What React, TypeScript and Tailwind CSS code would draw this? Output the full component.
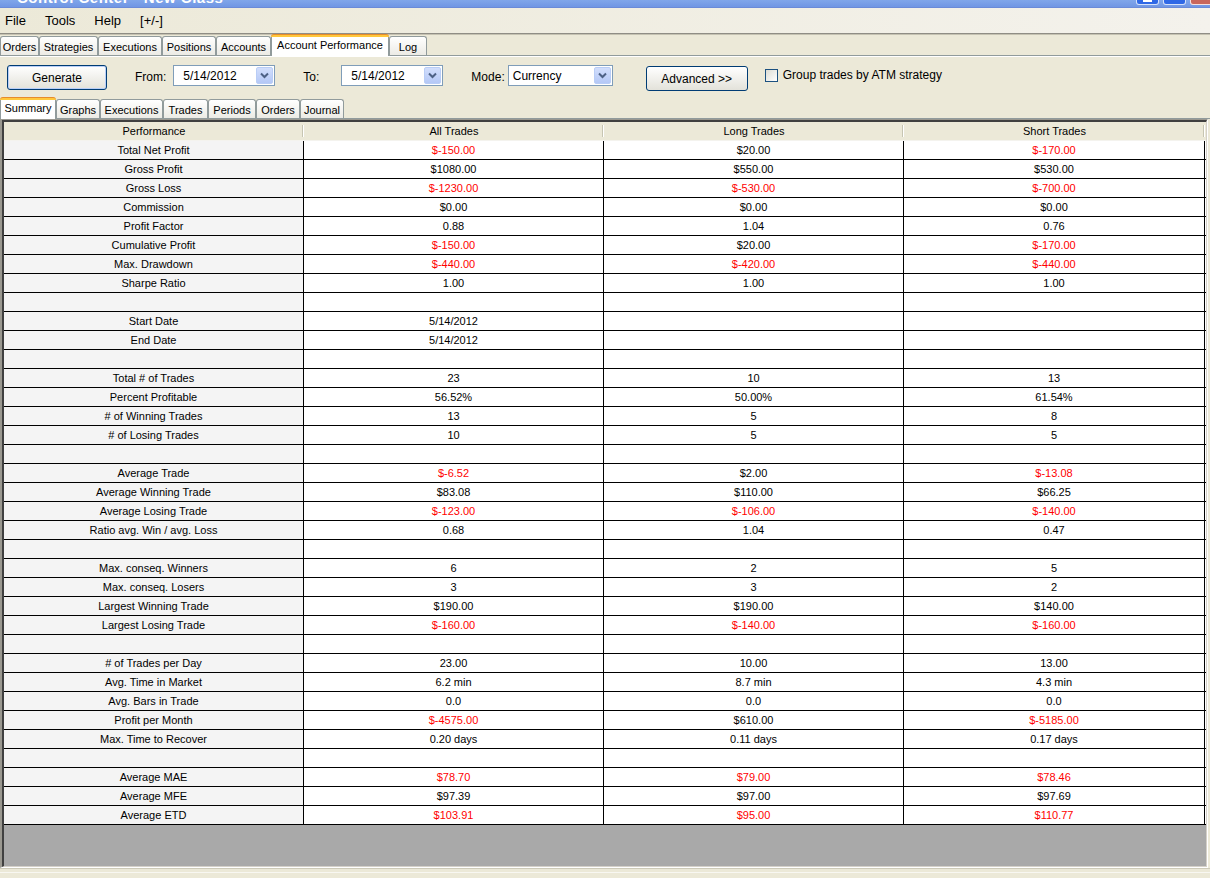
import React from "react";

type Row = { l: string; v: [string, string, string]; r?: [boolean, boolean, boolean] } | null;

const rows: Row[] = [
  { l: "Total Net Profit", v: ["$-150.00", "$20.00", "$-170.00"], r: [true, false, true] },
  { l: "Gross Profit", v: ["$1080.00", "$550.00", "$530.00"] },
  { l: "Gross Loss", v: ["$-1230.00", "$-530.00", "$-700.00"], r: [true, true, true] },
  { l: "Commission", v: ["$0.00", "$0.00", "$0.00"] },
  { l: "Profit Factor", v: ["0.88", "1.04", "0.76"] },
  { l: "Cumulative Profit", v: ["$-150.00", "$20.00", "$-170.00"], r: [true, false, true] },
  { l: "Max. Drawdown", v: ["$-440.00", "$-420.00", "$-440.00"], r: [true, true, true] },
  { l: "Sharpe Ratio", v: ["1.00", "1.00", "1.00"] },
  null,
  { l: "Start Date", v: ["5/14/2012", "", ""] },
  { l: "End Date", v: ["5/14/2012", "", ""] },
  null,
  { l: "Total # of Trades", v: ["23", "10", "13"] },
  { l: "Percent Profitable", v: ["56.52%", "50.00%", "61.54%"] },
  { l: "# of Winning Trades", v: ["13", "5", "8"] },
  { l: "# of Losing Trades", v: ["10", "5", "5"] },
  null,
  { l: "Average Trade", v: ["$-6.52", "$2.00", "$-13.08"], r: [true, false, true] },
  { l: "Average Winning Trade", v: ["$83.08", "$110.00", "$66.25"] },
  { l: "Average Losing Trade", v: ["$-123.00", "$-106.00", "$-140.00"], r: [true, true, true] },
  { l: "Ratio avg. Win / avg. Loss", v: ["0.68", "1.04", "0.47"] },
  null,
  { l: "Max. conseq. Winners", v: ["6", "2", "5"] },
  { l: "Max. conseq. Losers", v: ["3", "3", "2"] },
  { l: "Largest Winning Trade", v: ["$190.00", "$190.00", "$140.00"] },
  { l: "Largest Losing Trade", v: ["$-160.00", "$-140.00", "$-160.00"], r: [true, true, true] },
  null,
  { l: "# of Trades per Day", v: ["23.00", "10.00", "13.00"] },
  { l: "Avg. Time in Market", v: ["6.2 min", "8.7 min", "4.3 min"] },
  { l: "Avg. Bars in Trade", v: ["0.0", "0.0", "0.0"] },
  { l: "Profit per Month", v: ["$-4575.00", "$610.00", "$-5185.00"], r: [true, false, true] },
  { l: "Max. Time to Recover", v: ["0.20 days", "0.11 days", "0.17 days"] },
  null,
  { l: "Average MAE", v: ["$78.70", "$79.00", "$78.46"], r: [true, true, true] },
  { l: "Average MFE", v: ["$97.39", "$97.00", "$97.69"] },
  { l: "Average ETD", v: ["$103.91", "$95.00", "$110.77"], r: [true, true, true] },
];

const mainTabs = [
  { t: "Orders", w: "w-[39px]" },
  { t: "Strategies", w: "w-[59px]" },
  { t: "Executions", w: "w-[64px]" },
  { t: "Positions", w: "w-[54px]" },
  { t: "Accounts", w: "w-[55px]" },
  { t: "Account Performance", w: "w-[118px]", sel: true },
  { t: "Log", w: "w-[38px]" },
];

const subTabs = [
  { t: "Summary", w: "w-[56px]", sel: true },
  { t: "Graphs", w: "w-[44px]" },
  { t: "Executions", w: "w-[63px]" },
  { t: "Trades", w: "w-[45px]" },
  { t: "Periods", w: "w-[48px]" },
  { t: "Orders", w: "w-[44px]" },
  { t: "Journal", w: "w-[44px]" },
];

function Tab({ t, w, sel }: { t: string; w: string; sel?: boolean }) {
  if (sel) {
    return (
      <div className={`${w} h-[22px] mb-[-1px] flex flex-col relative z-10`}>
        <div className="h-[3px] bg-[#ffc83c] border-t border-[#e68b2c] rounded-t-[3px]" />
        <div className="flex-1 bg-white border-x border-[#919b9c] flex items-start justify-center pt-[1px] leading-[14px]">
          {t}
        </div>
      </div>
    );
  }
  return (
    <div
      className={`${w} h-[19px] border border-b-0 border-[#919b9c] rounded-t-[3px] bg-gradient-to-b from-[#ffffff] to-[#ecebe5] flex items-center justify-center leading-[14px] pt-[1px]`}
    >
      {t}
    </div>
  );
}

function Chevron() {
  return (
    <svg width="9" height="7" viewBox="0 0 9 7">
      <polyline points="1,1.5 4.5,5 8,1.5" fill="none" stroke="#4d6185" strokeWidth="2" />
    </svg>
  );
}

function Combo({ text, w, pl }: { text: string; w: string; pl: string }) {
  return (
    <div className={`${w} h-[21px] bg-white border border-[#7f9db9] flex items-center justify-between pr-[1px]`}>
      <span className={`${pl} text-[12px] leading-[14px]`}>{text}</span>
      <div className="w-[17px] h-[17px] rounded-[2px] border border-[#b9cdf6] bg-gradient-to-b from-[#d2defc] to-[#b4c8f6] flex items-center justify-center">
        <Chevron />
      </div>
    </div>
  );
}

function Cell({ text, red, bg }: { text: string; red?: boolean; bg: string }) {
  return (
    <div className={`${bg} border-r border-black flex items-center justify-center pt-[1px] ${red ? "text-[#ff0000]" : "text-black"}`}>
      {text}
    </div>
  );
}

export default function App() {
  return (
    <div className="w-[1210px] h-[878px] overflow-hidden flex flex-col bg-[#ece9d8] text-[11px] text-black font-['Liberation_Sans',Arial,sans-serif]">
      {/* Title bar */}
      <div className="h-[8px] shrink-0 bg-gradient-to-b from-[#80a6ea] to-[#7096e4] border-b border-[#6a8ad8] flex justify-between overflow-hidden">
        <div className="ml-[17px] mt-[-11px] text-white font-bold text-[15px] leading-[18px] tracking-[0.5px]">
          Control Center - New Class
        </div>
        <div className="flex gap-[4px] h-[6px] mt-[-1px]">
          <div className="w-[23px] h-[6px] rounded-b-[3px] border border-white/80 bg-[#2f68e6] flex justify-center">
            <div className="w-[9px] h-[2px] bg-white" />
          </div>
          <div className="w-[23px] h-[6px] rounded-b-[3px] border border-white/80 bg-[#2f68e6]" />
          <div className="w-[20px] h-[6px] rounded-bl-[3px] border border-r-0 border-white/80 bg-[#c8665c]" />
        </div>
      </div>

      {/* Menu bar */}
      <div className="h-[25px] shrink-0 bg-gradient-to-r from-[#ece9d8] to-[#f4f2ec] flex items-center pl-[5px] gap-[19px] text-[13px]">
        <span>File</span>
        <span>Tools</span>
        <span>Help</span>
        <span>[+/-]</span>
      </div>
      <div className="h-[2px] shrink-0 bg-[#8f8d85] border-b border-[#c5c2b2]" />

      {/* Main tabs */}
      <div className="h-[21px] shrink-0 flex items-end border-b border-[#919b9c] bg-[#ece9d8]">
        {mainTabs.map((t) => (
          <Tab key={t.t} {...t} />
        ))}
      </div>

      {/* Toolbar */}
      <div className="h-[41px] shrink-0 border-t border-white flex items-start pt-[8px]">
        <div className="ml-[7px] w-[100px] h-[25px] rounded-[3px] border border-[#003c74] bg-gradient-to-b from-[#ffffff] to-[#e3e2da] shadow-[inset_0_0_0_1px_#b9cff8] flex items-center justify-center text-[12px]">
          Generate
        </div>
        <span className="ml-[28px] mt-[5px] text-[12px] leading-[14px]">From:</span>
        <div className="ml-[7px]">
          <Combo text="5/14/2012" w="w-[102px]" pl="pl-[9px]" />
        </div>
        <span className="ml-[28px] mt-[5px] text-[12px] leading-[14px]">To:</span>
        <div className="ml-[22px]">
          <Combo text="5/14/2012" w="w-[102px]" pl="pl-[9px]" />
        </div>
        <span className="ml-[28px] mt-[5px] text-[12px] leading-[14px]">Mode:</span>
        <div className="ml-[3px]">
          <Combo text="Currency" w="w-[105px]" pl="pl-[4px]" />
        </div>
        <div className="ml-[33px] mt-[1px] w-[102px] h-[25px] rounded-[3px] border border-[#003c74] bg-gradient-to-b from-[#ffffff] to-[#e3e2da] flex items-center justify-center text-[12px]">
          Advanced &gt;&gt;
        </div>
        <div className="ml-[17px] mt-[4px] w-[13px] h-[13px] border border-[#1c5180] bg-gradient-to-br from-[#dcdcd4] to-[#ffffff]" />
        <span className="ml-[5px] mt-[3px] text-[12px] leading-[14px]">Group trades by ATM strategy</span>
      </div>

      {/* Sub tabs */}
      <div className="h-[22px] shrink-0 flex items-end border-b border-[#919b9c]">
        {subTabs.map((t) => (
          <Tab key={t.t} {...t} />
        ))}
      </div>

      {/* Panel */}
      <div className="flex-1 min-h-0 mr-[2px] border-t border-l-2 border-[#9a9890] border-b border-r border-b-white border-r-white flex flex-col">
        <div className="flex-1 min-h-0 border-t-2 border-l-2 border-[#404040] border-b border-r border-b-[#d4d0c8] border-r-[#d4d0c8] flex flex-col bg-[#a9a9a9]">
          {/* Header */}
          <div className="grid grid-cols-[300px_300px_300px_301px] h-[19px] shrink-0 bg-[#ece9d8] border-b border-[#f4f3ee]">
            {["Performance", "All Trades", "Long Trades", "Short Trades"].map((h) => (
              <div key={h} className="relative flex items-center justify-center pt-[1px]">
                {h}
                <div className="absolute right-0 top-[3px] bottom-[3px] w-[2px] border-l border-[#c7c5b2] bg-white" />
              </div>
            ))}
          </div>
          {rows.map((r, i) => (
            <div key={i} className="grid grid-cols-[300px_300px_300px_301px] h-[19px] shrink-0 border-b border-black bg-white">
              <Cell text={r ? r.l : ""} bg="bg-[#f4f4f4]" />
              <Cell text={r ? r.v[0] : ""} red={r?.r?.[0]} bg="bg-white" />
              <Cell text={r ? r.v[1] : ""} red={r?.r?.[1]} bg="bg-white" />
              <Cell text={r ? r.v[2] : ""} red={r?.r?.[2]} bg="bg-white" />
            </div>
          ))}
          <div className="flex-1" />
        </div>
      </div>
      <div className="h-[10px] shrink-0 border-t border-[#cdcab9] flex flex-col">
        <div className="mt-[3px] h-[1px] bg-[#f8f7f2]" />
      </div>
    </div>
  );
}
